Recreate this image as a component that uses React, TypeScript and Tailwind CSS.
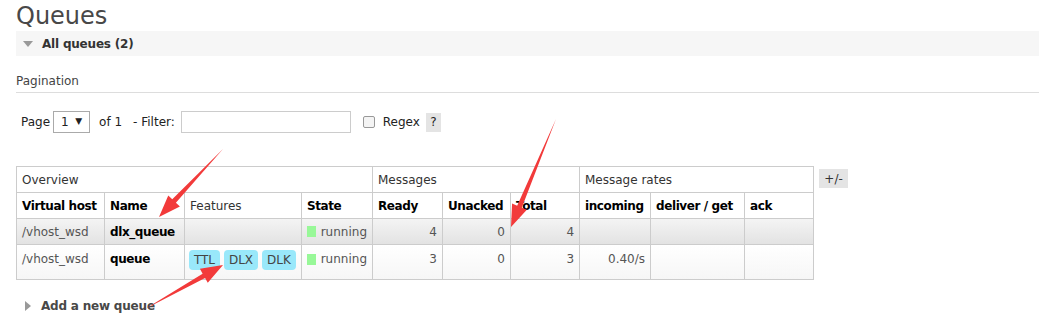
import React from "react";

const font = "font-['Verdana','DejaVu_Sans',sans-serif]";

const Badge = ({ label, w }: { label: string; w: string }) => (
  <span
    className={`inline-flex h-[20px] ${w} items-center justify-center rounded-[4px] bg-[#99e8fa] text-[12px] text-[#444]`}
  >
    {label}
  </span>
);

const Running = () => (
  <span className="flex items-center gap-[5px] text-[#555]">
    <span className="inline-block h-[11px] w-[11px] bg-[#98f898]" />
    running
  </span>
);

const Arrow = ({ x1, y1, x2, y2 }: { x1: number; y1: number; x2: number; y2: number }) => {
  // tapered red arrow pointing from (x1,y1) to (x2,y2)
  const dx = x2 - x1;
  const dy = y2 - y1;
  const len = Math.hypot(dx, dy);
  const ux = dx / len;
  const uy = dy / len;
  const px = -uy;
  const py = ux;
  const head = 22;
  const hx = x2 - ux * head;
  const hy = y2 - uy * head;
  const pts = [
    [x1, y1],
    [hx + px * 2.5, hy + py * 2.5],
    [hx + px * 8, hy + py * 8],
    [x2, y2],
    [hx - px * 8, hy - py * 8],
    [hx - px * 2.5, hy - py * 2.5],
  ]
    .map((p) => p.join(","))
    .join(" ");
  return <polygon points={pts} fill="#f23a3a" />;
};

export default function App() {
  const th = "border border-[#ccc] px-[5px] text-left font-bold text-black whitespace-nowrap tracking-[-0.4px]";
  const grp = "border border-[#ccc] px-[5px] text-left font-normal text-[#333]";
  const td = "border border-[#ccc] px-[5px] whitespace-nowrap";
  const bold = "font-bold text-black tracking-[-0.4px]";

  return (
    <div className={`relative h-[321px] w-[1039px] overflow-hidden bg-white ${font} text-[12px] text-[#333]`}>
      <h1 className="pl-[16px] pt-[2px] text-[24px] leading-[29px] text-[#484848]">Queues</h1>

      <div className="ml-[16px] flex h-[25px] items-center bg-[#f6f6f6]">
        <span className="ml-[7px] mr-[9px] h-0 w-0 border-x-[5px] border-t-[6px] border-x-transparent border-t-[#999]" />
        <span className="text-[12px] font-bold tracking-[-0.2px] text-[#333]">All queues (2)</span>
      </div>

      <div className="ml-[16px] mt-[18px] border-b border-[#ddd] pb-[4px] leading-[14px] text-[#444]">Pagination</div>

      <div className="ml-[21px] mt-[18px] flex items-center text-[#222]">
        <span>Page</span>
        <span className="ml-[3px] flex h-[22px] w-[37px] items-center justify-between border border-[#aaa] px-[7px]">
          <span>1</span>
          <span className="text-[9px]">▼</span>
        </span>
        <span className="ml-[9px]">of 1</span>
        <span className="ml-[11px]">- Filter:</span>
        <span className="ml-[6px] h-[22px] w-[170px] border border-[#ccc]" />
        <span className="ml-[12px] h-[12px] w-[12px] rounded-[2px] border border-[#999] bg-[#f4f4f4]" />
        <span className="ml-[8px]">Regex</span>
        <span className="ml-[6px] flex h-[19px] w-[15px] items-center justify-center bg-[#e4e4e4]">?</span>
      </div>

      <div className="ml-[16px] mt-[33px] flex items-start">
        <table className="w-[797px] table-fixed border-collapse">
          <colgroup>
            <col className="w-[88px]" />
            <col className="w-[80px]" />
            <col className="w-[117px]" />
            <col className="w-[71px]" />
            <col className="w-[70px]" />
            <col className="w-[68px]" />
            <col className="w-[69px]" />
            <col className="w-[71px]" />
            <col className="w-[94px]" />
            <col className="w-[69px]" />
          </colgroup>
          <thead>
            <tr className="h-[26px]">
              <th colSpan={4} className={grp}>Overview</th>
              <th colSpan={3} className={grp}>Messages</th>
              <th colSpan={3} className={grp}>Message rates</th>
            </tr>
            <tr className="h-[26px]">
              <th className={th}>Virtual host</th>
              <th className={th}>Name</th>
              <th className={`${grp} text-[#222]`}>Features</th>
              <th className={th}>State</th>
              <th className={th}>Ready</th>
              <th className={th}>Unacked</th>
              <th className={th}>Total</th>
              <th className={th}>incoming</th>
              <th className={th}>deliver / get</th>
              <th className={th}>ack</th>
            </tr>
          </thead>
          <tbody>
            <tr className="h-[26px] bg-gradient-to-b from-[#f4f4f4] to-[#e2e2e2] text-[#555]">
              <td className={td}>/vhost_wsd</td>
              <td className={`${td} ${bold}`}>dlx_queue</td>
              <td className={td}></td>
              <td className={td}><Running /></td>
              <td className={`${td} text-right`}>4</td>
              <td className={`${td} text-right`}>0</td>
              <td className={`${td} text-right`}>4</td>
              <td className={td}></td>
              <td className={td}></td>
              <td className={td}></td>
            </tr>
            <tr className="h-[35px] bg-gradient-to-b from-white to-[#f6f6f6] align-top text-[#555]">
              <td className={`${td} pt-[5px]`}>/vhost_wsd</td>
              <td className={`${td} pt-[5px] ${bold}`}>queue</td>
              <td className={`${td} pt-[5px] pl-[4px]`}>
                <span className="flex gap-[4px]">
                  <Badge label="TTL" w="w-[31px]" />
                  <Badge label="DLX" w="w-[34px]" />
                  <Badge label="DLK" w="w-[34px]" />
                </span>
              </td>
              <td className={`${td} pt-[5px]`}><Running /></td>
              <td className={`${td} pt-[5px] text-right`}>3</td>
              <td className={`${td} pt-[5px] text-right`}>0</td>
              <td className={`${td} pt-[5px] text-right`}>3</td>
              <td className={`${td} pt-[5px] text-right`}>0.40/s</td>
              <td className={td}></td>
              <td className={td}></td>
            </tr>
          </tbody>
        </table>
        <span className="ml-[5px] mt-[3px] flex h-[19px] w-[29px] items-center justify-center bg-[#e4e4e4] text-[#333]">+/-</span>
      </div>

      <div className="ml-[25px] mt-[17px] flex items-center">
        <span className="mr-[10px] h-0 w-0 border-y-[5px] border-l-[6px] border-y-transparent border-l-[#999]" />
        <span className="text-[12px] font-bold tracking-[-0.2px] text-[#484848]">Add a new queue</span>
      </div>

      <svg className="pointer-events-none absolute left-0 top-0" width="1039" height="321">
        <Arrow x1={223} y1={149} x2={159} y2={217} />
        <Arrow x1={556} y1={119} x2={511} y2={227} />
        <Arrow x1={145} y1={309} x2={223} y2={265} />
      </svg>
    </div>
  );
}
